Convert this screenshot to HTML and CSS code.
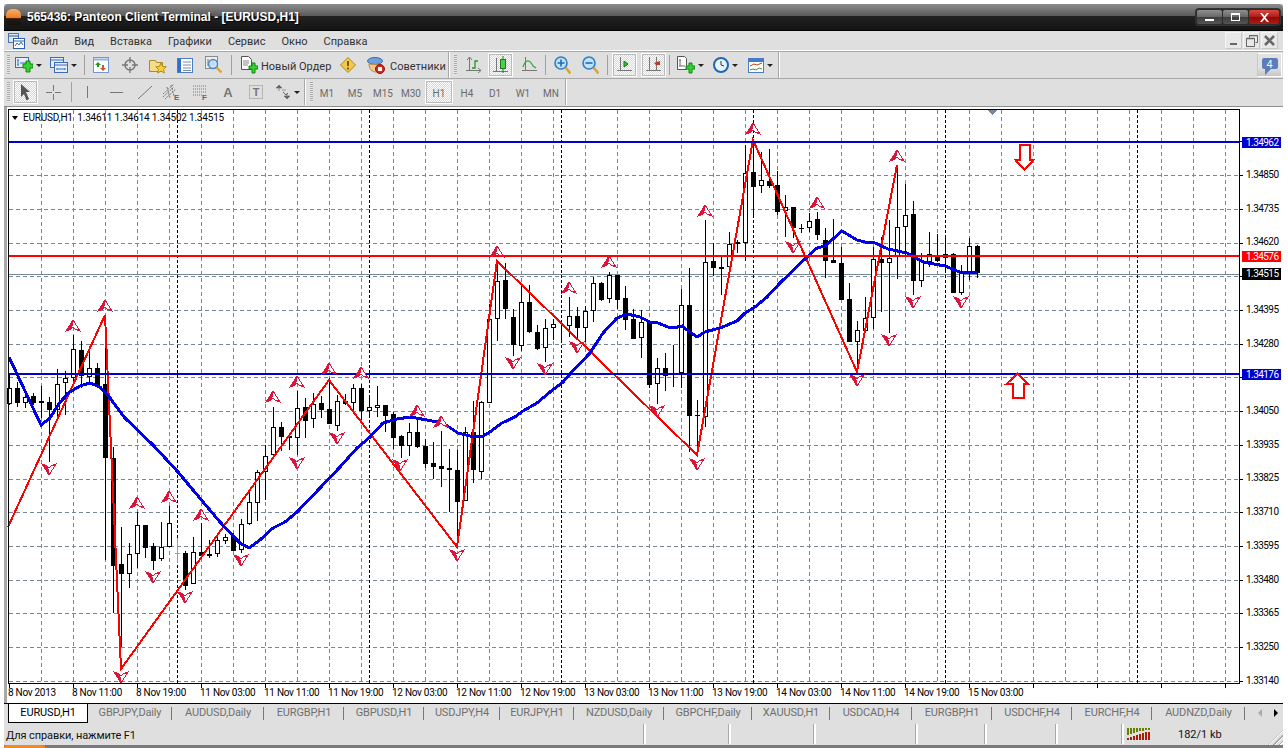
FILE: index.html
```html
<!DOCTYPE html>
<html lang="ru">
<head>
<meta charset="utf-8">
<title>565436: Panteon Client Terminal - [EURUSD,H1]</title>
<link rel="stylesheet" href="styles.css">
</head>
<body>
<div class="win">
  <header class="title">
    <span class="orb"></span>
    <span class="title-text">565436: Panteon Client Terminal - [EURUSD,H1]</span>
    <span class="caption">
      <span class="cap cap-min"><i class="g-min"></i></span>
      <span class="cap cap-max"><i class="g-max"></i></span>
      <span class="cap cap-close"><svg width="11" height="9" viewBox="0 0 11 9"><path d="M1 0h2l2.500 3L8 0h2L6.500 4.500 10 9H8L5.500 6 3 9H1l3.500-4.500z" fill="#fff"/></svg></span>
    </span>
  </header>

  <nav class="menu">
    <svg class="menu-ico" width="17" height="16" viewBox="0 0 17 16"><rect x=".5" y=".5" width="10" height="9" fill="#dbe6f7" stroke="#4a76b8"/><rect x="5.500" y="5.500" width="11" height="10" fill="#fff" stroke="#2e5ea6"/><path d="M.5 3h10M5.500 8h11" stroke="#2e5ea6"/><path d="M7 13l2-3 2 2 2-3 2 3" fill="none" stroke="#3a68b0"/></svg>
    <ul class="menu-list">
      <li>Файл</li><li>Вид</li><li>Вставка</li><li>Графики</li><li>Сервис</li><li>Окно</li><li>Справка</li>
    </ul>
    <span class="mdi">
      <span class="mdi-b"><i class="m-min"></i></span>
      <span class="mdi-b"><svg width="12" height="12" viewBox="0 0 12 12"><path d="M3.500 2.500V.5h8v7h-2M.5 3.500h8v8h-8z" fill="none" stroke="#666"/><path d="M.5 3.500h8M3.500.5h8" stroke="#666" stroke-width="1.500"/></svg></span>
      <span class="mdi-b"><svg width="11" height="11" viewBox="0 0 11 11"><path d="M1 1l9 9M10 1l-9 9" stroke="#666" stroke-width="2.600"/></svg></span>
    </span>
  </nav>
  <div class="rule-top"></div>

  <div class="bar">
    <div class="tools tools-a">
      <span class="grip"></span>
      <span class="b w31"><svg width="18" height="17" viewBox="0 0 18 17"><rect x=".5" y=".5" width="13" height="10" fill="#e6eefb" stroke="#3d6cb4"/><path d="M3 3v5M2 3h2M2 8h2M5 6h6" stroke="#3d6cb4"/><path d="M8 7h3V4h4v3h3v4h-3v4h-4v-4H8z" fill="#35d135" stroke="#0b8a0b"/></svg><i class="dd"></i></span>
      <span class="b w38"><svg width="18" height="17" viewBox="0 0 18 17"><rect x=".5" y=".5" width="13" height="10" fill="#e6eefb" stroke="#3d6cb4"/><rect x="4.500" y="5.500" width="13" height="10" fill="#e6eefb" stroke="#3d6cb4"/><path d="M.5 3h13M4.500 8h13M7 12h8M7 11v2M15 11v2" stroke="#3d6cb4"/></svg><i class="dd"></i></span>
      <i class="sep"></i>
      <span class="b w28"><svg width="16" height="16" viewBox="0 0 16 16"><rect x=".5" y=".5" width="15" height="15" fill="#fff" stroke="#6f98cf"/><path d="M.5 2.500h15" stroke="#8fb3e3" stroke-width="2"/><path d="M5 5l3 3H6v2H4V8H2z" fill="#1e9a1e"/><path d="M10 14l-3-3h2V8h2v3h2z" fill="#d9502a"/></svg></span>
      <span class="b w29"><svg width="16" height="16" viewBox="0 0 16 16"><circle cx="8" cy="8" r="5" fill="none" stroke="#777" stroke-width="1.500"/><path d="M8 0v6M8 10v6M0 8h6M10 8h6" stroke="#777" stroke-width="1.300"/></svg></span>
      <span class="b w27"><svg width="18" height="17" viewBox="0 0 18 17"><path d="M.5 3.500h6l1 2h6v9H.5z" fill="#f6dc8a" stroke="#a98a2c"/><path d="M12 6l1.600 3.400 3.600.4-2.700 2.500.8 3.700-3.300-1.900-3.300 1.900.8-3.700-2.700-2.500 3.600-.4z" fill="#f5d23d" stroke="#b08d13"/></svg></span>
      <span class="b w28"><svg width="16" height="15" viewBox="0 0 16 15"><rect x=".5" y=".5" width="15" height="14" fill="#fff" stroke="#4b7dc4"/><rect x="1" y="1" width="3" height="13" fill="#2e6fd0"/><path d="M6 4h8M6 7h8M6 10h8M6 12.500h8" stroke="#7a8aa3"/></svg></span>
      <span class="b w30"><svg width="18" height="18" viewBox="0 0 18 18"><rect x=".5" y=".5" width="12" height="12" fill="#eee" stroke="#8a8a8a"/><path d="M3 3v7M5 5v6M8 3v6" stroke="#777"/><circle cx="8" cy="8" r="4.500" fill="#bfe0f5" fill-opacity=".8" stroke="#4c8bc5" stroke-width="1.400"/><path d="M11.500 11.500l5 5" stroke="#d7a63a" stroke-width="2.400"/></svg></span>
      <i class="sep"></i>
      <span class="b btn-order"><svg width="18" height="18" viewBox="0 0 18 18"><path d="M1.500.5h7l3 3v10h-10z" fill="#fff" stroke="#555"/><path d="M3 5h6M3 7h6M3 9h5" stroke="#888"/><path d="M9 10h3V7h3v3h3v3h-3v4h-3v-4H9z" fill="#35d135" stroke="#0b8a0b"/></svg><span class="lbl">Новый Ордер</span></span>
      <span class="b w25"><svg width="16" height="16" viewBox="0 0 16 16"><path d="M8 .5L15.500 8 8 15.500.5 8z" fill="#f4c94a" stroke="#a9871c"/><path d="M7 4h2v5H7zM7 10.500h2v2H7z" fill="#7a5a10"/></svg></span>
      <span class="b btn-adv"><svg width="18" height="18" viewBox="0 0 18 18"><ellipse cx="8" cy="5" rx="7.500" ry="3.500" fill="#6f9fdc" stroke="#3a6aa8"/><path d="M2 8c0 5 3 8 7 8s6-3 6-7z" fill="#f3c98a" stroke="#b58a4a"/><circle cx="13" cy="13" r="4.500" fill="#d9281e" stroke="#8e120c"/><rect x="11" y="11" width="4" height="4" fill="#fff"/></svg><span class="lbl">Советники</span></span>
    </div>
    <div class="tools tools-b">
      <span class="grip"></span>
      <span class="b w24"><svg width="15" height="16" viewBox="0 0 15 16"><path d="M3.500 0v13M0 13.500h15M1 3l2.500-3L6 3M12 11l3 2.500-3 2.500" fill="none" stroke="#777"/><path d="M6 11h3V4h3" fill="none" stroke="#1e9a1e" stroke-width="1.300"/></svg></span>
      <span class="b sel w25 ml3"><svg width="15" height="20" viewBox="0 0 15 20"><path d="M3.500 3v13M0 16.500h15" fill="none" stroke="#777"/><path d="M10 1v17" stroke="#1e7a1e"/><rect x="7.500" y="4.500" width="5" height="9" fill="#4bd14b" stroke="#1e7a1e"/></svg></span>
      <span class="b w32"><svg width="15" height="16" viewBox="0 0 15 16"><path d="M3.500 0v13M0 13.500h15" fill="none" stroke="#777"/><path d="M1 10c3-9 7-7 10-1l3 2" fill="none" stroke="#3aa03a" stroke-width="1.200"/></svg></span>
      <i class="sep sep0"></i>
      <span class="b w32"><svg width="17" height="19" viewBox="0 0 17 19"><circle cx="7" cy="7" r="6" fill="#bfe2f7" stroke="#2f7fc4" stroke-width="1.600"/><path d="M3.500 7h7M7 3.500v7" stroke="#2467ad" stroke-width="1.600"/><path d="M11.500 11.500l5 6" stroke="#d6a437" stroke-width="2.600"/></svg></span>
      <span class="b w24"><svg width="17" height="19" viewBox="0 0 17 19"><circle cx="7" cy="7" r="6" fill="#bfe2f7" stroke="#2f7fc4" stroke-width="1.600"/><path d="M3.500 7h7" stroke="#2467ad" stroke-width="1.600"/><path d="M11.500 11.500l5 6" stroke="#d6a437" stroke-width="2.600"/></svg></span>
      <i class="sep sep0 ml5"></i>
      <span class="b sel w25 ml4"><svg width="15" height="16" viewBox="0 0 15 16"><path d="M3.500 0v13M0 13.500h15" fill="none" stroke="#777"/><path d="M7 4l4 3-4 3z" fill="#2ecb2e" stroke="#146e14"/></svg></span>
      <span class="b sel w25 ml4"><svg width="15" height="16" viewBox="0 0 15 16"><path d="M3.500 0v13M0 13.500h15M10.500 0v13" fill="none" stroke="#777"/><path d="M14 4v4h-4l-2-2z" fill="#c3381c"/></svg></span>
      <i class="sep sep0 ml3"></i>
      <span class="b w41"><svg width="18" height="18" viewBox="0 0 18 18"><path d="M.5.500h7l2 2v11h-9z" fill="#fff" stroke="#555"/><path d="M3 4v6M2 4h2M2 10h6" stroke="#666"/><path d="M9 10h3V7h3v3h3v3h-3v4h-3v-4H9z" fill="#35d135" stroke="#0b8a0b"/></svg><i class="dd"></i></span>
      <span class="b w29"><svg width="16" height="16" viewBox="0 0 16 16"><circle cx="8" cy="8" r="7" fill="#eaf4fc" stroke="#1d67b5" stroke-width="2"/><path d="M8 4v4l3 1" fill="none" stroke="#333"/></svg><i class="dd"></i></span>
      <span class="b w40"><svg width="16" height="15" viewBox="0 0 16 15"><rect x=".5" y=".5" width="15" height="14" fill="#fff" stroke="#4c7bbf"/><rect x="1" y="1" width="14" height="3" fill="#3f7bd1"/><path d="M2 8l4-2 3 1 5-2" fill="none" stroke="#b5471f"/><path d="M2 12l3-1 3 1 3-2 3 1" fill="none" stroke="#3a9a3a"/></svg><i class="dd"></i></span>
    </div>
    <span class="notify"><span class="bubble">4</span></span>
  </div>
  <div class="rule-mid"></div>

  <div class="bar">
    <div class="tools tools-draw">
      <span class="grip"></span>
      <span class="b sel w25"><svg width="11" height="17" viewBox="0 0 11 17"><path d="M1 0l9 8H6l3 7-2.500 1.500L4 10l-3 3z" fill="#555"/></svg></span>
      <span class="b w31"><svg width="15" height="15" viewBox="0 0 15 15"><path d="M7.500 0v6M7.500 9v6M0 7.500h6M9 7.500h6" stroke="#777"/></svg></span>
      <i class="sep"></i>
      <span class="b w26"><i class="vl"></i></span>
      <span class="b w32"><i class="hl"></i></span>
      <span class="b w25"><svg width="14" height="13" viewBox="0 0 14 13"><path d="M0 13L14 0" stroke="#777"/></svg></span>
      <span class="b w28"><svg width="17" height="17" viewBox="0 0 17 17"><path d="M0 10L11 0M0 13L11 3M2 15L13 5M4 3l3 11M8 1l3 11" stroke="#777" stroke-dasharray="2 1"/><text class="tiny" x="11" y="16">E</text></svg></span>
      <span class="b w30"><svg width="16" height="17" viewBox="0 0 16 17"><path d="M1 2h13M1 5h13M1 8h13M1 11h10" stroke="#777" stroke-dasharray="1 1"/><text class="tiny" x="10" y="16">F</text></svg></span>
      <span class="b w26 glyph-a">A</span>
      <span class="b w29"><svg width="14" height="14" viewBox="0 0 14 14"><rect x=".5" y=".5" width="13" height="13" fill="none" stroke="#888" stroke-dasharray="1 1"/><text class="tbox" x="7" y="11">T</text></svg></span>
      <span class="b w36"><svg width="15" height="14" viewBox="0 0 15 14"><path d="M3 0l3 3H0zM6 5h4M3 6V3M11 14l-3-3h6zM11 11V8" fill="#666" stroke="#666" stroke-width=".6"/><path d="M7 7l3 3 2-2" fill="none" stroke="#666"/></svg><i class="dd"></i></span>
    </div>
    <div class="tools tools-tf">
      <span class="grip"></span>
      <span class="tf">M1</span><span class="tf">M5</span><span class="tf">M15</span><span class="tf">M30</span><span class="tf tf-sel">H1</span><span class="tf">H4</span><span class="tf">D1</span><span class="tf">W1</span><span class="tf">MN</span>
    </div>
  </div>
  <div class="rule-low"></div>

  <main class="chart">
    <div class="plot">
      <svg id="plot" class="canvas" width="1232" height="575" viewBox="8 109 1232 575" aria-hidden="true"></svg>
      <div class="legend"><i class="legend-tri"></i><span>EURUSD,H1&nbsp; 1.34611 1.34614 1.34502 1.34515</span></div>
    </div>
    <div class="yaxis">
      <span>1.34850</span><span>1.34735</span><span>1.34620</span><span>1.34505</span><span>1.34395</span><span>1.34280</span><span>1.34165</span><span>1.34050</span><span>1.33935</span><span>1.33825</span><span>1.33710</span><span>1.33595</span><span>1.33480</span><span>1.33365</span><span>1.33250</span><span>1.33140</span>
      <b class="tag tag-blue t1">1.34962</b>
      <b class="tag tag-red t2">1.34576</b>
      <b class="tag tag-black t3">1.34515</b>
      <b class="tag tag-blue t4">1.34176</b>
    </div>
    <div class="xaxis">
      <span>8 Nov 2013</span><span>8 Nov 11:00</span><span>8 Nov 19:00</span><span>11 Nov 03:00</span><span>11 Nov 11:00</span><span>11 Nov 19:00</span><span>12 Nov 03:00</span><span>12 Nov 11:00</span><span>12 Nov 19:00</span><span>13 Nov 03:00</span><span>13 Nov 11:00</span><span>13 Nov 19:00</span><span>14 Nov 03:00</span><span>14 Nov 11:00</span><span>14 Nov 19:00</span><span>15 Nov 03:00</span>
    </div>
  </main>

  <div class="tabs">
    <span class="tab tab-on w80">EURUSD,H1</span>
    <span class="tab w84">GBPJPY,Daily</span>
    <span class="tab w92">AUDUSD,Daily</span>
    <span class="tab w80">EURGBP,H1</span>
    <span class="tab w80">GBPUSD,H1</span>
    <span class="tab w76">USDJPY,H4</span>
    <span class="tab w74">EURJPY,H1</span>
    <span class="tab w90">NZDUSD,Daily</span>
    <span class="tab w88">GBPCHF,Daily</span>
    <span class="tab w78">XAUUSD,H1</span>
    <span class="tab w82">USDCAD,H4</span>
    <span class="tab w80">EURGBP,H1</span>
    <span class="tab w80">USDCHF,H4</span>
    <span class="tab w80">EURCHF,H4</span>
    <span class="tab w93">AUDNZD,Daily</span>
    <span class="tab-nav"><i class="nav-l"></i><i class="nav-r"></i></span>
  </div>

  <footer class="status">
    <span class="st st-help">Для справки, нажмите F1</span>
    <span class="st st-a"></span>
    <span class="st st-b"></span>
    <span class="st st-c"></span>
    <span class="st st-d"></span>
    <span class="st st-e"></span>
    <span class="st st-f"></span>
    <span class="st st-net">
      <svg width="24" height="12" viewBox="0 0 24 12"><path d="M0 0h2v7H0zM3 0h2v6H3zM6 0h2v5H6zM9 0h2v4H9zM12 0h2v3h-2zM15 0h2v3h-2zM18 0h2v2h-2zM21 0h2v2h-2z" fill="#668000"/><path d="M0 10h2v2H0zM3 9h2v3H3zM6 8h2v4H6zM9 7h2v5H9zM12 6h2v6h-2zM15 5h2v7h-2zM18 4h2v8h-2zM21 4h2v8h-2z" fill="#a81e08"/></svg>
      <span class="net-txt">182/1 kb</span>
    </span>
    <i class="resize"></i>
  </footer>
  <div class="taskbar"><i class="start"></i></div>
</div>
<script src="chart.js"></script>
</body>
</html>
```
FILE: styles.css
```css
* { box-sizing: border-box; }
html, body { margin: 0; padding: 0; background: #fff; }
body { font: 11px Roboto, "Liberation Sans", sans-serif; color: #222; overflow: hidden; }
i { display: block; font-style: normal; }
.win { margin: 4px 0 0 4px; width: 1279px; height: 744px; display: flex; flex-direction: column; overflow: hidden; background: #dfdfdf; }

/* title bar */
.title { flex: none; height: 27px; display: flex; align-items: center; padding-left: 2px; border-radius: 4px 4px 0 0; border-bottom: 1px solid #000;
  background: linear-gradient(#8c8c8c 0, #5a5a5a 12px, #222 12px, #141414 100%); }
.orb { width: 15px; height: 16px; margin-right: 6px; border-radius: 6px 6px 3px 3px; background: linear-gradient(#f7b070, #ef7c1e 55%, #2a1a0a 60%, #111); }
.title-text { color: #fff; font: bold 12px "Liberation Sans", sans-serif; text-shadow: 1px 1px 1px #000; white-space: nowrap; }
.caption { margin-left: auto; margin-right: 3px; display: flex; height: 16px; gap: 1px; padding: 0 1px; border-radius: 3px; background: #2c2c2c; box-shadow: 0 0 0 1px #333; }
.cap { width: 25px; height: 14px; margin-top: 1px; display: flex; align-items: center; justify-content: center; border-radius: 2px; background: linear-gradient(#8f8f8f, #666 50%, #3c3c3c 50%, #555); }
.cap-close { width: 30px; background: linear-gradient(#d84a44, #b01a14 50%, #8c0a06 50%, #b01a14); }
.g-min { width: 9px; height: 2px; margin-top: 6px; background: #fff; }
.g-max { width: 9px; height: 8px; border: 1px solid #fff; border-top-width: 2px; }

/* menu */
.menu { flex: none; height: 19px; display: flex; align-items: center; padding-left: 4px; }
.menu-ico { flex: none; margin-right: 6px; }
.menu-list { display: flex; gap: 16px; margin: 1px 0 0; padding: 0; list-style: none; color: #333; font-size: 11px; }
.mdi { margin-left: auto; margin-right: 5px; display: flex; gap: 1px; }
.mdi-b { width: 17px; height: 17px; display: flex; align-items: center; justify-content: center; background: #e8e8e8; border: 1px solid #f4f4f4; border-right-color: #c8c8c8; border-bottom-color: #c8c8c8; }
.m-min { width: 7px; height: 2px; margin-top: 6px; background: #666; }
.rule-top { flex: none; height: 2px; background: linear-gradient(#fff 50%, #a8a8a8 50%); }
.rule-mid { flex: none; height: 1px; background: #a8a8a8; }
.rule-low { flex: none; height: 2px; background: linear-gradient(#dfdfdf 50%, #8c8c8c 50%); }

/* toolbars */
.bar { flex: none; height: 26px; display: flex; align-items: stretch; position: relative; }
.tools { flex: none; display: flex; align-items: center; padding-left: 3px; border-right: 1px solid #fff; box-shadow: inset -1px 0 0 #a8a8a8; }
.tools-a { width: 446px; }
.tools-b { width: 330px; padding-left: 4px; }
.tools-b .grip { margin-right: 4px; }
.tools-draw { width: 302px; }
.tools-tf { width: 261px; padding-left: 4px; }
.tools-tf .grip { margin-right: 0; }
.grip { flex: none; width: 3px; height: 20px; margin-right: 3px; background: repeating-linear-gradient(#aaa 0 1px, #e8e8e8 1px 2px); }
.b { flex: none; height: 24px; display: flex; align-items: center; justify-content: center; gap: 3px; }
.sel { background: repeating-conic-gradient(#fff 0 25%, #d8d8d8 0 50%) 0 0 / 2px 2px; border: 1px solid #fff; outline: 1px solid #bbb; outline-offset: -2px; }
.sep { flex: none; width: 1px; height: 20px; margin: 0 2px; background: #a0a0a0; }
.sep.sep0 { margin: 0; }
.sep.ml3, .ml3 { margin-left: 3px; } .sep.ml5 { margin-left: 5px; } .ml4 { margin-left: 4px; }
.dd { width: 0; height: 0; border: 3px solid transparent; border-top: 3px solid #222; border-bottom: 0; }
.lbl { padding-top: 2px; color: #333; font-size: 11px; white-space: nowrap; }
.w24 { width: 24px; } .w25 { width: 25px; } .w26 { width: 26px; } .w27 { width: 27px; } .w28 { width: 28px; } .w29 { width: 29px; } .w30 { width: 30px; } .w31 { width: 31px; } .w32 { width: 32px; } .w36 { width: 36px; } .w38 { width: 38px; } .w40 { width: 40px; } .w41 { width: 41px; }
.btn-order { width: 101px; justify-content: flex-start; padding-left: 6px; }
.btn-adv { width: 85px; margin-left: 4px; padding-left: 3px; gap: 5px; justify-content: flex-start; }
.vl { width: 1px; height: 12px; background: #777; }
.hl { width: 13px; height: 1px; background: #777; }
.glyph-a { color: #777; font: bold 13px "Liberation Sans", sans-serif; }
.tiny { font: bold 8px "Liberation Sans", sans-serif; fill: #666; }
.tbox { font: bold 11px "Liberation Sans", sans-serif; fill: #777; text-anchor: middle; }
.tf { flex: none; width: 28px; height: 24px; display: flex; align-items: center; justify-content: center; padding-top: 2px; color: #6a6a6a; font-size: 10px; }
.tf-sel { background: repeating-conic-gradient(#fff 0 25%, #d8d8d8 0 50%) 0 0 / 2px 2px; border: 1px solid #fff; outline: 1px solid #bbb; outline-offset: -2px; }
.notify { position: absolute; right: 1px; top: 1px; width: 25px; height: 24px; display: flex; justify-content: center; padding-top: 4px; border: 1px solid #fff; border-left-color: #c8c8c8; background: linear-gradient(#e2e2e2 60%, #c6c6c6); }
.bubble { position: relative; width: 16px; height: 11px; display: flex; align-items: center; justify-content: center; border-radius: 2px; background: #5c7eb8; color: #fff; font: 11px "Liberation Sans", sans-serif; }
.bubble::after { content: ""; position: absolute; left: 3px; top: 11px; border: 3px solid transparent; border-top-color: #5c7eb8; border-left-color: #5c7eb8; }

/* chart */
.chart { flex: none; height: 596px; display: grid; grid-template-columns: 1232px 1fr; grid-template-rows: 575px 19px; padding: 2px 0 0 1px; border-left: 3px solid #a8a8a8; background: #fff; }
.plot { position: relative; }
.canvas { display: block; overflow: visible; shape-rendering: crispEdges; }
.legend { position: absolute; left: 4px; top: 3px; display: flex; align-items: center; gap: 5px; color: #000; font-size: 10px; letter-spacing: -.2px; white-space: nowrap; }
.legend-tri { border: 3.500px solid transparent; border-top: 4px solid #000; border-bottom: 0; }
.yaxis { position: relative; display: flex; flex-direction: column; padding: 49px 0 0 6px; color: #000; font-size: 10px; letter-spacing: -.55px; }
.yaxis span { flex: none; height: 33.730px; line-height: 33.730px; }
.tag { position: absolute; left: 2px; width: 39px; height: 11px; padding-left: 4px; line-height: 11px; color: #fff; font-weight: 400; }
.tag-blue { background: #0000cd; } .tag-red { background: #f00; } .tag-black { background: #000; }
.t1 { top: 28px; } .t2 { top: 142px; } .t3 { top: 159px; height: 12px; } .t4 { top: 260px; }
.xaxis { grid-column: 1 / -1; display: flex; padding-top: 3px; color: #000; font-size: 10px; letter-spacing: -.28px; }
.xaxis span { flex: none; width: 64px; white-space: nowrap; }

/* tabs */
.tabs { flex: none; height: 20px; display: flex; padding-left: 1px; border-top: 1px solid #000; }
.tab { flex: none; height: 18px; display: flex; align-items: center; justify-content: center; padding-bottom: 1px; color: #707070; font-size: 11px; letter-spacing: -.15px; position: relative; }
.tab::after { content: ""; position: absolute; right: 0; top: 3px; height: 13px; width: 1px; background: #777; }
.tab-on { margin-left: 3px; height: 19px; padding-bottom: 2px; color: #000; background: #fff; border: 1px solid #000; border-top: 0; }
.tab-on::after { display: none; }
.w74 { width: 74px; } .w76 { width: 76px; } .w78 { width: 78px; } .w80 { width: 80px; } .w82 { width: 82px; } .w84 { width: 84px; } .w88 { width: 88px; } .w90 { width: 90px; } .w92 { width: 92px; } .w93 { width: 93px; }
.tab-nav { flex: 1; display: flex; align-items: center; justify-content: flex-end; gap: 12px; padding: 0 5px 1px 0; }
.nav-l { border: 4px solid transparent; border-right: 4px solid #aaa; border-left: 0; }
.nav-r { border: 4px solid transparent; border-left: 4px solid #000; border-right: 0; }

/* status */
.status { flex: none; height: 22px; display: flex; align-items: center; position: relative; }
.st { flex: none; height: 20px; display: flex; align-items: center; border-right: 1px solid #fff; box-shadow: 1px 0 0 #fff, inset -1px 0 0 #a8a8a8; }
.st-help { width: 641px; padding: 2px 0 0 2px; color: #111; font-size: 11px; letter-spacing: -.1px; }
.st-a { width: 85px; } .st-b { width: 85px; } .st-c { width: 102px; } .st-d { width: 69px; } .st-e { width: 71px; } .st-f { width: 66px; }
.st-net { flex: 1; padding-left: 4px; border: 0; box-shadow: none; }
.net-txt { margin-left: 27px; padding-top: 1px; color: #111; font-size: 11px; }
.resize { position: absolute; right: 0; bottom: 0; width: 15px; height: 15px; background: repeating-linear-gradient(135deg, transparent 0 2px, #a8a8a8 2px 3px, #fff 3px 4px); clip-path: polygon(100% 0, 100% 100%, 0 100%); }
.taskbar { flex: none; height: 3px; background: #7a7a7a; position: relative; }
.start { width: 41px; height: 3px; border-radius: 2px 2px 0 0; background: #f08a1c; }
```
FILE: chart.js
```js
(function () {
  var candles = [
    [373,405,388,404,'w'],[382,407,388,403,'b'],[392,408,397,403,'w'],[393,405,396,403,'b'],[386,418,401,403,'b'],[397,462,402,410,'b'],[369,416,384,410,'w'],[371,415,378,383,'w'],
    [335,385,349,378,'w'],[341,388,350,376,'b'],[350,385,368,377,'w'],[363,388,368,385,'b'],[338,560,384,458,'b'],[447,613,458,566,'b'],[527,647,564,574,'b'],[543,588,554,574,'w'],
    [512,568,525,554,'w'],[525,558,525,548,'b'],[543,570,546,561,'b'],[522,561,547,559,'w'],[506,547,523,547,'w'],[538,563,553,553,'g'],[551,590,553,586,'b'],[537,584,552,584,'w'],
    [523,556,552,556,'b'],[540,558,554,556,'b'],[537,557,540,554,'w'],[534,544,537,541,'w'],[533,551,536,551,'b'],[519,553,524,550,'w'],[490,525,502,524,'w'],[470,521,472,503,'w'],
    [445,500,456,472,'w'],[407,455,427,455,'w'],[422,451,427,437,'b'],[433,450,436,438,'b'],[391,455,408,438,'w'],[398,438,407,421,'b'],[393,428,404,419,'w'],[396,418,403,410,'b'],
    [378,424,409,424,'b'],[395,431,401,426,'w'],[394,405,401,404,'b'],[384,412,388,403,'w'],[384,420,388,411,'b'],[397,418,407,411,'w'],[386,417,405,408,'w'],[405,432,405,416,'b'],
    [412,449,414,438,'b'],[435,458,436,446,'b'],[423,456,432,446,'w'],[420,448,432,447,'b'],[439,468,446,464,'b'],[442,479,463,467,'b'],[431,487,466,469,'b'],[449,512,468,470,'b'],
    [450,547,470,502,'b'],[427,501,432,501,'w'],[401,483,432,470,'b'],[401,479,402,472,'w'],[304,403,319,403,'w'],[262,341,281,319,'w'],[263,319,280,309,'b'],[309,356,317,345,'b'],
    [285,351,302,346,'w'],[285,333,302,332,'b'],[325,350,332,349,'b'],[319,362,328,348,'w'],[319,340,324,328,'w'],[325,340,0,0,'n'],[297,337,316,326,'w'],[307,338,316,328,'b'],
    [306,342,311,328,'w'],[277,322,283,311,'w'],[282,301,283,300,'b'],[272,303,275,299,'w'],[275,309,275,300,'b'],[286,330,298,320,'b'],[309,339,319,339,'b'],[310,358,322,338,'w'],
    [320,388,322,385,'b'],[358,404,368,384,'w'],[353,391,368,376,'b'],[345,387,0,0,'n'],[289,388,305,373,'w'],[268,452,305,416,'b'],[400,455,415,416,'b'],[220,427,262,417,'w'],
    [243,276,261,268,'b'],[257,295,267,268,'w'],[232,267,244,267,'w'],[240,253,242,244,'w'],[145,261,173,243,'w'],[140,215,172,187,'b'],[152,193,180,186,'w'],[149,188,181,186,'b'],
    [171,215,185,212,'b'],[195,237,207,211,'w'],[207,238,207,228,'b'],[224,233,228,228,'b'],[213,232,221,228,'w'],[212,240,219,235,'b'],[228,278,240,261,'b'],[219,263,260,263,'b'],
    [247,300,263,300,'b'],[283,342,299,342,'b'],[321,370,330,342,'w'],[297,330,318,331,'w'],[247,329,259,318,'w'],[237,312,259,263,'b'],[220,333,258,263,'w'],[165,279,227,257,'w'],
    [184,257,215,227,'w'],[201,295,214,281,'b'],[253,287,260,281,'w'],[232,267,254,262,'w'],[234,262,257,261,'b'],[237,272,254,258,'w'],[253,293,254,293,'b'],[265,295,273,293,'w'],
    [238,280,246,272,'w'],[245,278,246,273,'b']
  ];
  var zigzag = '8,527 105,315 121,669 329,380 457,547 497,261 697,455 753,140 857,372 897,165';
  var ma = '9,357 41,425 50,418 58,405 68,393 80,386 90,383 100,387 110,398 125,418 153,445 178,472 193,490 220,522 240,543 249,548 260,540 273,528 285,522 297,512 320,488 340,467 357,448 370,437 383,423 397,419 410,417 427,420 443,423 458,433 470,436 483,436 490,432 502,423 515,417 523,411 537,403 550,392 563,382 570,374 590,353 603,333 617,318 627,314 640,317 650,322 658,323 668,327 673,328 682,326 690,332 697,337 705,332 720,328 737,321 745,313 755,307 767,297 780,283 807,257 817,248 825,246 842,231 857,240 865,242 873,242 888,249 907,253 923,262 945,266 962,273 977,272';
  var ups = [[73,326],[105,306],[273,397],[297,382],[137,503],[169,497],[201,515],[329,369],[361,373],[497,252],[569,288],[609,262],[417,411],[441,422],[705,211],[753,129],[817,203],[897,156]];
  var downs = [[49,469],[297,463],[153,577],[185,597],[241,560],[121,677],[337,438],[400,465],[457,555],[513,363],[545,369],[577,347],[657,411],[697,464],[857,380],[889,340],[913,302],[961,302],[793,247]];
  var gridY = [141.3,175,208.7,242.5,276.2,310,343.6,377.4,411,444.8,478.6,512,545.7,579.6,613.4,647.2,681];
  var out = [], i, x, y;

  out.push('<rect x="8" y="109" width="1232" height="575" fill="#fff"/>');
  var g = '', sep = '', ticks = '';
  for (x = 41; x < 1239; x += 32) { g += 'M' + (x + .5) + ' 110V683'; }
  for (x = 177; x < 1239; x += 192) { sep += 'M' + (x + .5) + ' 110V683'; }
  for (i = 0; i < gridY.length; i++) {
    y = Math.round(gridY[i]) + .5;
    g += 'M9 ' + y + 'H1239';
    ticks += 'M1239 ' + y + 'H1243';
  }
  for (x = 9; x < 1239; x += 64) { ticks += 'M' + (x + .5) + ' 683V688'; }
  out.push('<path d="' + g + '" stroke="#778899" stroke-dasharray="4 3" fill="none"/>');
  out.push('<path d="' + sep + '" stroke="#000" stroke-dasharray="3 2" fill="none"/>');
  out.push('<path d="M9 274.500H1239" stroke="#778899"/>');

  var wick = '', green = '', bodies = '';
  candles.forEach(function (c, k) {
    var cx = 9 + 8 * k, px = cx + .5;
    if (c[4] === 'g') {
      green += 'M' + px + ' ' + c[0] + 'V' + c[1] + 'M' + (cx - 2) + ' ' + (c[2] + .5) + 'h5';
      return;
    }
    wick += 'M' + px + ' ' + c[0] + 'V' + c[1];
    if (c[4] === 'b') {
      bodies += '<rect x="' + (cx - 2) + '" y="' + c[2] + '" width="5" height="' + Math.max(1, c[3] - c[2]) + '" fill="#000"/>';
    } else if (c[4] === 'w') {
      bodies += '<rect x="' + (cx - 1.5) + '" y="' + (c[2] + .5) + '" width="4" height="' + Math.max(1, c[3] - c[2] - 1) + '" fill="#fff" stroke="#000"/>';
    }
  });
  out.push('<path d="' + wick + '" stroke="#000" fill="none"/>');
  out.push('<path d="' + green + '" stroke="#32e632" fill="none"/>');
  out.push(bodies);

  out.push('<polyline points="' + zigzag + '" fill="none" stroke="#f00" stroke-width="2"/>');
  out.push('<polyline points="' + ma + '" fill="none" stroke="#0000e6" stroke-width="3"/>');
  out.push('<path d="M9 141.500H1239M9 142.500H1239" stroke="#0000cd"/>');
  out.push('<path d="M9 255.500H1239M9 256.500H1239" stroke="#f00"/>');
  out.push('<path d="M9 373.500H1239M9 374.500H1239" stroke="#0000cd"/>');

  function marker(p, flip) {
    var tf = 'translate(' + p[0] + ' ' + p[1] + ')' + (flip ? ' scale(1 -1)' : '');
    out.push('<g transform="' + tf + '"><path d="M-7 5L0-6 7 5 2 3 0 1-2 3Z" fill="#fff" stroke="#dc143c"/><path d="M-6 4L0-5-.5 0-2 3Z" fill="#dc143c"/></g>');
  }
  ups.forEach(function (p) { marker(p, false); });
  downs.forEach(function (p) { marker(p, true); });

  out.push('<path d="M1019.500 144.500H1029.500V159.500H1034L1024.500 169.500 1015 159.500H1019.500Z" fill="#fff" stroke="#f00" stroke-width="2"/>');
  out.push('<path d="M1012.500 397.500H1023.500V383.500H1028L1017.500 373.500 1007 383.500H1012.500Z" fill="#fff" stroke="#f00" stroke-width="2"/>');
  out.push('<path d="M987 110H997L992 115Z" fill="#778899"/>');
  out.push('<path d="' + ticks + '" stroke="#000" fill="none"/>');
  out.push('<rect x="8.500" y="109.500" width="1231" height="574" fill="none" stroke="#000"/>');
  document.getElementById('plot').innerHTML = out.join('');
})();
```
